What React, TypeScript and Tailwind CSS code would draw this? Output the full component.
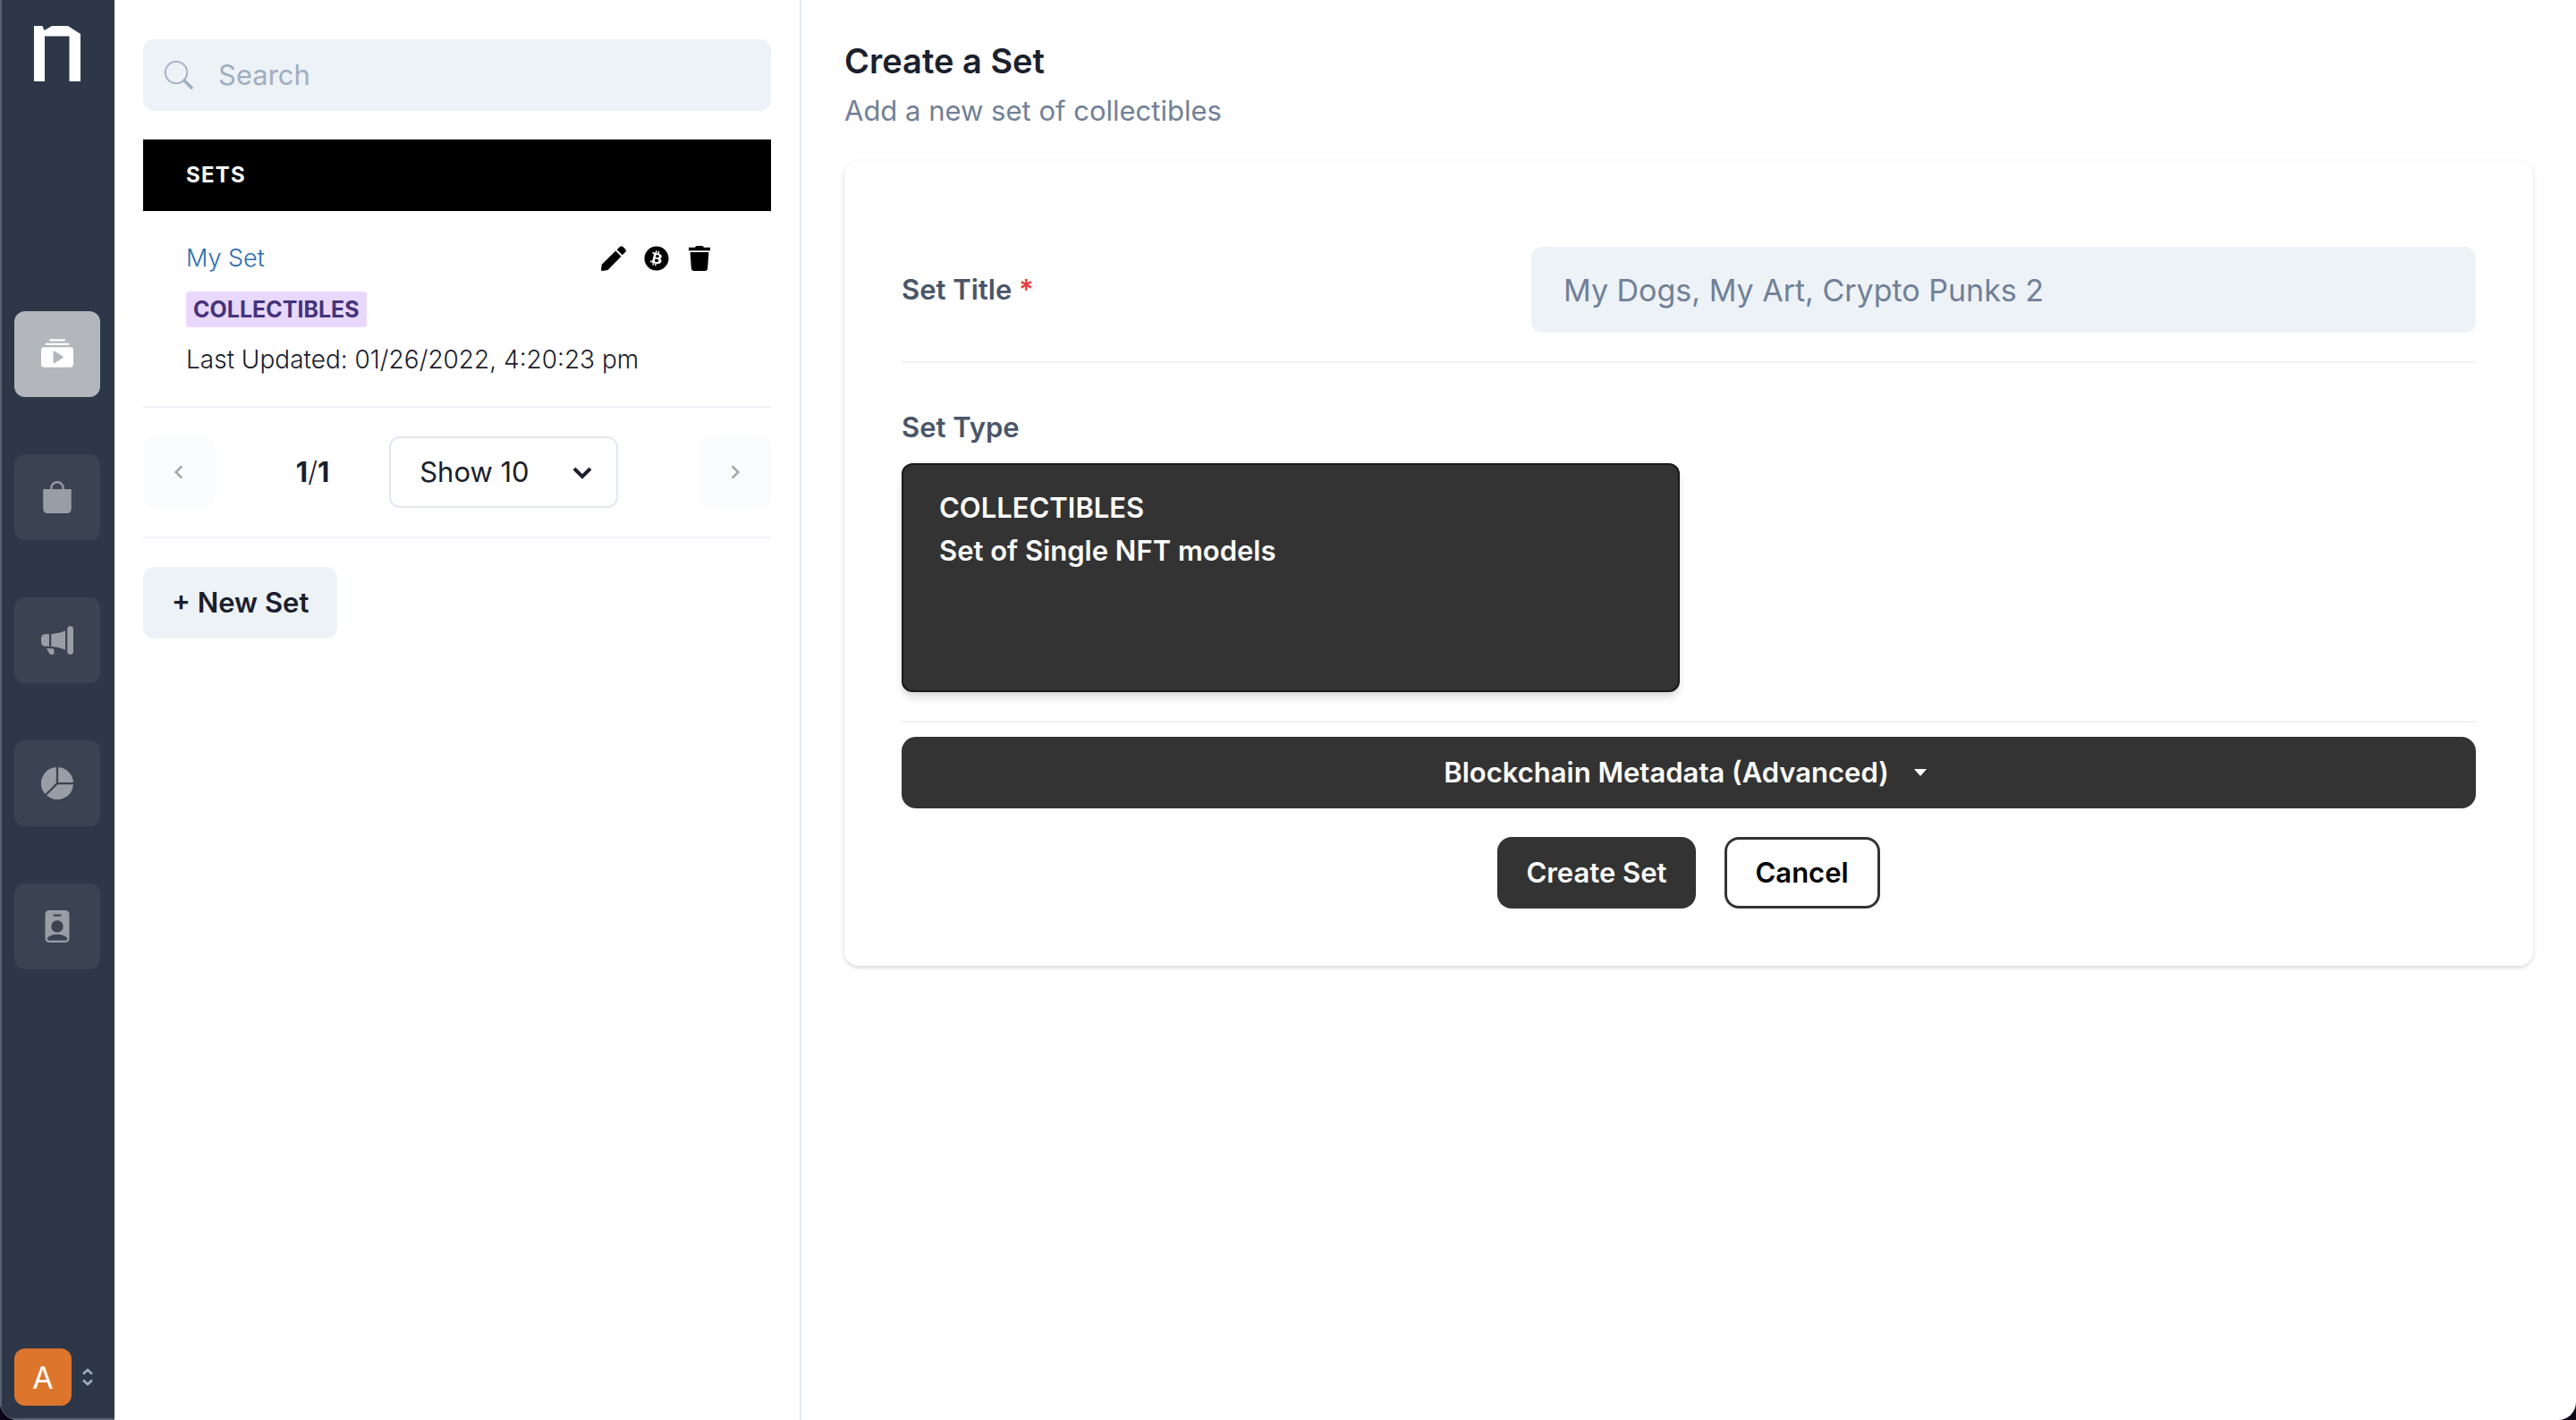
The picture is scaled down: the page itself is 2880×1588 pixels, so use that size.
import React from "react";
import {
  BsBagFill,
  BsCollectionPlayFill,
  BsMegaphoneFill,
  BsPersonBadgeFill,
  BsPieChartFill,
} from "react-icons/bs";
import { FaBitcoin } from "react-icons/fa";

const navItems = [
  { label: "Sets", Icon: BsCollectionPlayFill, active: true },
  { label: "Store", Icon: BsBagFill, active: false },
  { label: "Campaigns", Icon: BsMegaphoneFill, active: false },
  { label: "Analytics", Icon: BsPieChartFill, active: false },
  { label: "Accounts", Icon: BsPersonBadgeFill, active: false },
];

function Logo() {
  return (
    <svg viewBox="0 0 52 62" className="h-[62px] w-[52px]" fill="#fff" aria-hidden="true">
      <path d="M0 0h9.500l2 5L20 0h18l14 9v53H39.500V11.500H12V62H0z" />
    </svg>
  );
}

function SearchIcon() {
  return (
    <svg viewBox="0 0 32 32" className="size-8" fill="none" stroke="currentColor" aria-hidden="true">
      <circle cx="13" cy="13" r="12.200" strokeWidth="1.800" />
      <path d="M22 22l8 8" strokeWidth="3.600" strokeLinecap="round" />
    </svg>
  );
}

function PencilIcon() {
  return (
    <svg viewBox="0 0 28 28" className="size-7" fill="currentColor" aria-hidden="true">
      <path d="M16.300 5.600l6.200 6.200L7.500 27 1.500 28Q0 28 0 26.500L.8 20.800z" />
      <path d="M17.700 4.200l3.200-3.200q1.800-1.600 3.600 0l2.500 2.500q1.600 1.800 0 3.600l-3.200 3.200z" />
    </svg>
  );
}

function TrashIcon() {
  return (
    <svg viewBox="0 0 28 28" className="size-7" fill="currentColor" aria-hidden="true">
      <path d="M2 1.800h7L10.300 0h7.400L19 1.800h7v3.400H2z" />
      <path d="M3.600 7h20.800l-1.300 18.600q-.2 2.400-2.600 2.400h-13q-2.400 0-2.600-2.400z" />
    </svg>
  );
}

function Chevron({ d, className }: { d: string; className: string }) {
  return (
    <svg viewBox="0 0 24 24" className={className} fill="none" stroke="currentColor" aria-hidden="true">
      <path d={d} />
    </svg>
  );
}

function Sidebar() {
  return (
    <aside className="flex w-32 shrink-0 flex-col border-b-2 border-l-2 border-[#5a6270] bg-[#2d3748] pt-[29px] pr-4 pb-3.5 pl-3.5">
      <div className="flex justify-center">
        <Logo />
      </div>
      <nav className="mt-[257px] flex flex-col gap-16">
        {navItems.map(({ label, Icon, active }) => (
          <button
            key={label}
            aria-label={label}
            className={
              active
                ? "flex size-24 items-center justify-center rounded-xl bg-[#b3b6bb] text-white"
                : "flex size-24 items-center justify-center rounded-xl bg-[#3b4352] text-[#999da5]"
            }
          >
            <Icon className="size-9" />
          </button>
        ))}
      </nav>
      <button aria-label="Account menu" className="mt-auto flex items-center gap-3">
        <span className="flex size-16 shrink-0 items-center justify-center rounded-xl bg-[#dd752c] text-[34px] text-white">
          A
        </span>
        <svg viewBox="0 0 12 20" className="h-5 w-3" fill="none" stroke="#a0aec0" strokeWidth="2.600" aria-hidden="true">
          <path d="M1 6.500l5-4.500 5 4.500M1 13.500l5 4.500 5-4.500" />
        </svg>
      </button>
    </aside>
  );
}

function SetsPanel() {
  return (
    <section className="w-[768px] shrink-0 border-r-2 border-[#e2e8f0] px-8 pt-11">
      <label className="flex h-20 items-center gap-7 rounded-xl bg-[#edf2f7] px-6 text-[#a0aec0]">
        <SearchIcon />
        <input
          type="search"
          aria-label="Search"
          placeholder="Search"
          className="min-w-0 flex-1 bg-transparent text-[31px] outline-none placeholder:text-[#a0aec0]"
        />
      </label>

      <table className="mt-8 w-full border-collapse text-left">
        <thead>
          <tr className="h-20 bg-black">
            <th className="px-12 text-2xl font-bold tracking-wider text-white">SETS</th>
          </tr>
        </thead>
        <tbody>
          <tr className="border-b-2 border-[#edf2f7]">
            <td className="px-12 pt-8 pb-8">
              <div className="flex items-center justify-between pr-[18px]">
                <a href="#my-set" className="text-[27px] leading-[42px] font-light text-[#2b6cb0]">
                  My Set
                </a>
                <div className="flex gap-5 text-black">
                  <button aria-label="Edit set"><PencilIcon /></button>
                  <button aria-label="Blockchain details"><FaBitcoin className="size-7" /></button>
                  <button aria-label="Delete set"><TrashIcon /></button>
                </div>
              </div>
              <div className="mt-4 flex">
                <span className="rounded bg-[#e9d8fd] px-2 text-[25px] leading-10 font-bold text-[#44337a]">
                  COLLECTIBLES
                </span>
              </div>
              <p className="mt-4 text-[28px] leading-10 font-light text-[#1a202c]">
                Last Updated: 01/26/2022, 4:20:23 pm
              </p>
            </td>
          </tr>
        </tbody>
      </table>

      <div className="flex items-center justify-between border-b-2 border-[#edf2f7] py-8">
        <button aria-label="Previous page" className="flex size-20 items-center justify-center rounded-xl bg-[#f9fbfd] text-[#a3a6ab]">
          <Chevron d="M16 4l-8 8 8 8" className="size-5 stroke-3" />
        </button>
        <p className="text-[31px] leading-10">
          <span className="font-bold">1</span>
          <span className="font-light">/</span>
          <span className="font-bold">1</span>
        </p>
        <div className="-ml-6 flex w-64">
          <div className="relative flex-1">
            <select
              aria-label="Rows per page"
              defaultValue="10"
              className="h-20 w-full appearance-none rounded-xl border-2 border-[#e2e8f0] bg-white px-8 text-[31px]"
            >
              <option value="10">Show 10</option>
              <option value="20">Show 20</option>
              <option value="30">Show 30</option>
            </select>
            <Chevron d="M3 8l9 9 9-9" className="pointer-events-none absolute top-7 right-7 size-6 stroke-4" />
          </div>
        </div>
        <button aria-label="Next page" className="flex size-20 items-center justify-center rounded-xl bg-[#f9fbfd] text-[#a3a6ab]">
          <Chevron d="M8 4l8 8-8 8" className="size-5 stroke-3" />
        </button>
      </div>

      <button className="mt-8 h-20 rounded-xl bg-[#edf2f7] px-8 text-[31px] font-semibold">+ New Set</button>
    </section>
  );
}

function CreateSetForm() {
  return (
    <form
      onSubmit={(event) => event.preventDefault()}
      className="mt-8 rounded-2xl bg-white p-16 shadow-[0_2px_6px_rgba(0,0,0,0.1),0_2px_4px_rgba(0,0,0,0.06)]"
    >
      <div className="flex items-center border-b-2 border-[#edf2f7] py-8">
        <label htmlFor="set-title" className="w-2/5 text-[31px] font-semibold text-[#4a5568]">
          Set Title <span className="text-[#e53e3e]">*</span>
        </label>
        <input
          id="set-title"
          type="text"
          placeholder="My Dogs, My Art, Crypto Punks 2"
          className="h-24 w-3/5 rounded-xl bg-[#edf2f7] px-9 text-[34px] outline-none placeholder:text-[#718096]"
        />
      </div>

      <div role="radiogroup" aria-labelledby="set-type" className="border-b-2 border-[#edf2f7] pt-12 pb-8">
        <h2 id="set-type" className="mb-4 text-[31px] leading-12 font-semibold text-[#4a5568]">
          Set Type
        </h2>
        <label className="block h-64 w-[870px] max-w-full rounded-xl border-2 border-[#1a1a1a] bg-[#333] px-10 pt-6 text-[31px] leading-12 font-semibold text-white shadow-[0_8px_12px_-2px_rgba(0,0,0,0.1),0_4px_8px_-2px_rgba(0,0,0,0.1)]">
          <input type="radio" name="set-type" defaultChecked className="sr-only" />
          COLLECTIBLES
          <br />
          Set of Single NFT models
        </label>
      </div>

      <button
        type="button"
        className="mt-4 flex h-20 w-full items-center justify-center gap-7 rounded-2xl bg-[#333] text-[31px] font-semibold text-white"
      >
        Blockchain Metadata (Advanced)
        <svg viewBox="0 0 14 8" className="mr-2 h-2 w-3.5" fill="currentColor" aria-hidden="true">
          <path d="M0 0h14L7 8z" />
        </svg>
      </button>

      <div className="mt-8 flex justify-center gap-8">
        <button type="submit" className="h-20 rounded-2xl bg-[#333] px-8 text-[31px] font-semibold text-white">
          Create Set
        </button>
        <button type="button" className="h-20 rounded-2xl border-3 border-[#333] bg-white px-8 text-[31px] font-semibold text-black">
          Cancel
        </button>
      </div>
    </form>
  );
}

export default function App() {
  return (
    <div className="bg-[#0b0718] font-['Inter',sans-serif] text-[#1a202c]">
      <div className="flex min-h-screen overflow-hidden rounded-b-[20px] bg-white">
        <Sidebar />
        <SetsPanel />
        <main className="min-w-0 flex-1 px-12 pt-11">
          <h1 className="text-[38px] leading-12 font-semibold">Create a Set</h1>
          <p className="mt-2 text-[31px] leading-12 text-[#718096]">Add a new set of collectibles</p>
          <CreateSetForm />
        </main>
      </div>
    </div>
  );
}
